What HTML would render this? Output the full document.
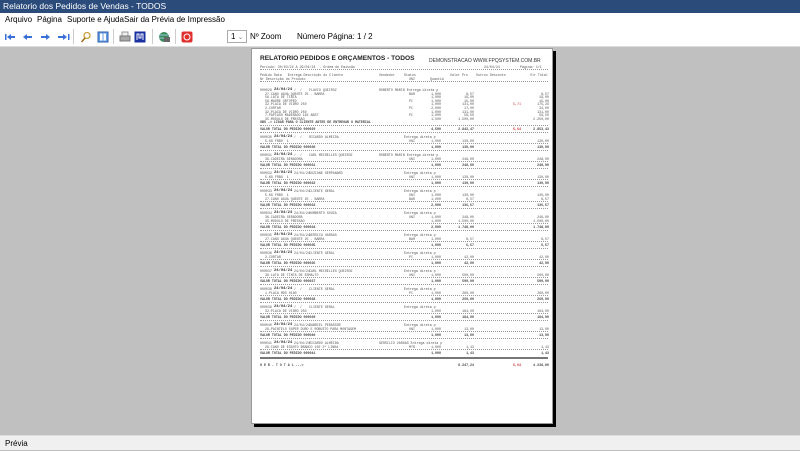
<!DOCTYPE html>
<html><head><meta charset="utf-8"><style>
*{margin:0;padding:0;box-sizing:border-box}
body{width:800px;height:450px;overflow:hidden;background:#c0c0c0;font-family:"Liberation Sans",sans-serif;position:relative}
#tb{position:absolute;left:0;top:0;width:800px;height:13px;background:#2b4b7b;color:#fff;font-size:8.5px;line-height:13px;padding-left:3px}
#mn{position:absolute;left:0;top:13px;width:800px;height:13px;background:#fff;font-size:8px;line-height:13px}
#mn span{position:absolute;top:0}
#tl{position:absolute;left:0;top:26px;width:800px;height:21px;background:#fff;border-bottom:1px solid #ddd}
.ic{position:absolute;top:5px}
.sep{position:absolute;top:3px;width:1px;height:15px;background:#ccc}
#st{position:absolute;left:0;top:435px;width:800px;height:15px;background:#f0f0f0;font-size:8px;line-height:15px;padding-left:5px;border-top:1px solid #ddd}
#sh{position:absolute;left:254px;top:51px;width:302px;height:376px;background:#000}
#pg{position:absolute;left:251px;top:48px;width:302px;height:376px;background:#fff;border:1px solid #999;font-family:"Liberation Mono",monospace;color:#555;font-size:3.3px;overflow:hidden}
.r{position:absolute;left:0;width:302px;height:4px;line-height:4px;white-space:pre}
.r span{position:absolute;top:0}
.a{left:8px}.d{left:22px;font-weight:bold;color:#333;font-size:3.8px}.s{left:42px}.c{left:57px}.v{left:127px}.e{left:152px}
.i{left:13px}.u{left:157px}.q{right:113px}.p{right:80px}.x{right:33px;color:#c33}.t{right:5px}
.dl{position:absolute;left:8px;width:288px;border-top:1px dotted #999;height:0}
.tot{color:#444;font-weight:bold}
</style></head><body>
<div id="tb">Relatorio dos Pedidos de Vendas - TODOS</div>
<div id="mn"><span style="left:5px">Arquivo</span><span style="left:37px">Página</span><span style="left:67px">Suporte e Ajuda</span><span style="left:124px">Sair da Prévia de Impressão</span></div>
<div id="tl">
<svg class="ic" style="left:4px" width="70" height="12"><g fill="#3a6fd8"><rect x="1" y="3" width="1.5" height="6"/><path d="M3 6l4-3v2h4v2H7v2z"/><path d="M19 6l4-3v2h5v2h-5v2z"/><path d="M46 6l-4-3v2h-5v2h5v2z"/><path d="M63 6l-4-3v2h-5v2h5v2z"/><rect x="64" y="3" width="1.5" height="6"/></g></svg>
<div class="sep" style="left:73px"></div>
<svg class="ic" style="left:80px" width="12" height="12"><circle cx="7" cy="4.5" r="3" fill="none" stroke="#c9a040" stroke-width="1.3"/><path d="M5 7L1.5 11" stroke="#a07020" stroke-width="1.6"/></svg>
<svg class="ic" style="left:97px" width="12" height="12"><rect x="1" y="1" width="10" height="10" fill="#6a9ee0" stroke="#2a5fb0"/><rect x="3" y="2.5" width="2.5" height="7" fill="#fff"/><rect x="6.5" y="2.5" width="2.5" height="7" fill="#fff"/></svg>
<div class="sep" style="left:113px"></div>
<svg class="ic" style="left:119px" width="12" height="12"><rect x="3" y="1" width="6" height="4" fill="#eee" stroke="#999"/><rect x="1" y="5" width="10" height="5" fill="#aaa" stroke="#777"/></svg>
<svg class="ic" style="left:134px" width="12" height="12"><rect x="0.5" y="0.5" width="11" height="11" fill="#1a2fa0"/><path d="M3 9V3h2v4h2V3h2v6" fill="none" stroke="#fff" stroke-width="1"/></svg>
<div class="sep" style="left:152px"></div>
<svg class="ic" style="left:158px" width="13" height="12"><circle cx="6" cy="6" r="5" fill="#3a8a5a"/><path d="M2 4h8M1 7h10" stroke="#9cd" stroke-width="1"/><rect x="6" y="6" width="6" height="5" fill="#666"/></svg>
<div class="sep" style="left:175px"></div>
<svg class="ic" style="left:181px" width="12" height="12"><rect x="0.5" y="0.5" width="11" height="11" rx="2" fill="#e03030"/><circle cx="6" cy="6" r="3" fill="none" stroke="#fff" stroke-width="1"/></svg>
<div style="position:absolute;left:227px;top:4px;width:20px;height:13px;border:1px solid #aaa;font-size:8px;line-height:11px;padding-left:3px">1 <span style="color:#888;font-size:7px">⌄</span></div>
<div style="position:absolute;left:250px;top:4px;font-size:8px;line-height:13px">Nº Zoom</div>
<div style="position:absolute;left:297px;top:4px;font-size:8px;line-height:13px">Número Página: 1 / 2</div>
</div>
<div id="sh"></div>
<div id="pg">
<div style="position:absolute;left:8px;top:6px;font-family:'Liberation Sans',sans-serif;font-weight:bold;font-size:6.6px;color:#222;white-space:nowrap">RELATORIO PEDIDOS E ORÇAMENTOS - TODOS</div>
<div style="position:absolute;left:177px;top:9px;font-family:'Liberation Sans',sans-serif;font-size:5px;color:#333;white-space:nowrap">DEMONSTRACAO WWW.FPQSYSTEM.COM.BR</div>
<div class="r" style="top:16px"><span class="a">Período: 30/03/24 A 29/04/24  - Ordem de Emissão</span><span style="left:232px">24/04/24</span><span style="left:268px">Página: 1/1</span></div>
<div class="dl" style="top:20px"></div>
<div class="r" style="top:24px"><span class="a">Pedido Data   Entrega Descrição do Cliente</span><span class="v">Vendedor</span><span class="e">Status</span><span style="left:198px">Valor Pro</span><span style="left:224px">Outros Desconto</span><span style="left:278px">Vlr Total</span></div>
<div class="r" style="top:28px"><span class="a">Nr Descrição do Produto</span><span class="u">UNI</span><span style="left:178px">Quantid</span></div>
<div class="dl" style="top:32px"></div>

<div class="r" style="top:39px"><span class="a">000029</span><span class="d">24/04/24</span><span class="s">/  /</span><span class="c">FLAVIO QUEIROZ</span><span class="v">ROBERTO MARIN Entrega direta p</span></div>
<div class="r" style="top:42.6px"><span class="i">27-CANO AGUA QUENTE 25 - BARRA</span><span class="u">BAR</span><span class="q">1,000</span><span class="p">6,57</span><span class="t">6,57</span></div>
<div class="r" style="top:46.2px"><span class="i">56-LATA DE TINTA</span><span class="q">1,000</span><span class="p">19,00</span><span class="t">19,00</span></div>
<div class="r" style="top:49.8px"><span class="i">58-MADRE ORTOPED</span><span class="u">PC</span><span class="q">1,000</span><span class="p">15,00</span><span class="t">15,00</span></div>
<div class="r" style="top:53.4px"><span class="i">32-PLACA DE VIDRO 250</span><span class="q">1,000</span><span class="p">131,00</span><span class="x">5,71</span><span class="t">175,29</span></div>
<div class="r" style="top:57px"><span class="i">2-CORTAR</span><span class="u">PC</span><span class="q">2,000</span><span class="p">17,00</span><span class="t">34,00</span></div>
<div class="r" style="top:60.6px"><span class="i">32-PLACA DE VIDRO 250</span><span class="q">1,000</span><span class="p">131,00</span><span class="t">131,00</span></div>
<div class="r" style="top:64.2px"><span class="i">7-PAPIASO MADERADO 162 ABST</span><span class="u">PC</span><span class="q">1,000</span><span class="p">59,50</span><span class="t">59,50</span></div>
<div class="r" style="top:67.8px"><span class="i">35-MODULO DE PRESSAO</span><span class="q">1,500</span><span class="p">1.500,00</span><span class="t">2.250,00</span></div>
<div class="r tot" style="top:71.4px"><span class="a">OBS -&gt; LIGAR PARA O CLIENTE ANTES DE ENTREGAR O MATERIAL</span></div>
<div class="dl" style="top:76px"></div>
<div class="r tot" style="top:78px"><span class="a">VALOR TOTAL DO PEDIDO 000029</span><span class="q">4,500</span><span class="p">2.842,47</span><span class="x">5,64</span><span class="t">2.853,43</span></div>
<div class="dl" style="top:83px"></div>

<div class="r" style="top:86px"><span class="a">000030</span><span class="d">24/04/24</span><span class="s">/  /</span><span class="c">RICARDO ALMEIDA</span><span class="e">Entrega direta p</span></div>
<div class="r" style="top:90px"><span class="i">5-KG FRBO  1</span><span class="u">UNI</span><span class="q">1,000</span><span class="p">130,00</span><span class="t">130,00</span></div>
<div class="dl" style="top:94px"></div>
<div class="r tot" style="top:96px"><span class="a">VALOR TOTAL DO PEDIDO 000030</span><span class="q">1,000</span><span class="p">130,00</span><span class="t">130,00</span></div>
<div class="dl" style="top:101px"></div>

<div class="r" style="top:104px"><span class="a">000031</span><span class="d">24/04/24</span><span class="s">/  /</span><span class="c">CARL MEIRELLES QUEIROZ</span><span class="v">ROBERTO MARIN Entrega direta p</span></div>
<div class="r" style="top:108px"><span class="i">36-CADEIRA GERADORA</span><span class="u">UNI</span><span class="q">1,000</span><span class="p">248,00</span><span class="t">248,00</span></div>
<div class="dl" style="top:112px"></div>
<div class="r tot" style="top:114px"><span class="a">VALOR TOTAL DO PEDIDO 000031</span><span class="q">1,000</span><span class="p">248,00</span><span class="t">248,00</span></div>
<div class="dl" style="top:119px"></div>

<div class="r" style="top:122px"><span class="a">000032</span><span class="d">24/04/24</span><span class="s">24/04/24</span><span class="c">SUZIANE SERPANARD</span><span class="e">Entrega direta p</span></div>
<div class="r" style="top:126px"><span class="i">5-KG FRBO  1</span><span class="u">UNI</span><span class="q">1,000</span><span class="p">130,00</span><span class="t">130,00</span></div>
<div class="dl" style="top:130px"></div>
<div class="r tot" style="top:132px"><span class="a">VALOR TOTAL DO PEDIDO 000032</span><span class="q">1,000</span><span class="p">130,00</span><span class="t">130,00</span></div>
<div class="dl" style="top:137px"></div>

<div class="r" style="top:140px"><span class="a">000033</span><span class="d">24/04/24</span><span class="s">24/04/24</span><span class="c">CLIENTE GERAL</span><span class="e">Entrega direta p</span></div>
<div class="r" style="top:144px"><span class="i">5-KG FRBO  1</span><span class="u">UNI</span><span class="q">1,000</span><span class="p">130,00</span><span class="t">130,00</span></div>
<div class="r" style="top:147.6px"><span class="i">27-CANO AGUA QUENTE 25 - BARRA</span><span class="u">BAR</span><span class="q">1,000</span><span class="p">6,57</span><span class="t">6,57</span></div>
<div class="dl" style="top:152px"></div>
<div class="r tot" style="top:154px"><span class="a">VALOR TOTAL DO PEDIDO 000033</span><span class="q">2,000</span><span class="p">136,57</span><span class="t">136,57</span></div>
<div class="dl" style="top:159px"></div>

<div class="r" style="top:162px"><span class="a">000034</span><span class="d">24/04/24</span><span class="s">24/04/24</span><span class="c">HUMBERTO SOUZA</span><span class="e">Entrega direta p</span></div>
<div class="r" style="top:166px"><span class="i">36-CADEIRA GERADORA</span><span class="u">UNI</span><span class="q">1,000</span><span class="p">248,00</span><span class="t">248,00</span></div>
<div class="r" style="top:169.6px"><span class="i">35-MODULO DE PRESSAO</span><span class="q">1,000</span><span class="p">1.500,00</span><span class="t">1.500,00</span></div>
<div class="dl" style="top:174px"></div>
<div class="r tot" style="top:176px"><span class="a">VALOR TOTAL DO PEDIDO 000034</span><span class="q">2,000</span><span class="p">1.748,00</span><span class="t">1.748,00</span></div>
<div class="dl" style="top:181px"></div>

<div class="r" style="top:184px"><span class="a">000035</span><span class="d">24/04/24</span><span class="s">24/04/24</span><span class="c">GERSICA VARGAS</span><span class="e">Entrega direta p</span></div>
<div class="r" style="top:188px"><span class="i">27-CANO AGUA QUENTE 25 - BARRA</span><span class="u">BAR</span><span class="q">1,000</span><span class="p">6,57</span><span class="t">6,57</span></div>
<div class="dl" style="top:192px"></div>
<div class="r tot" style="top:194px"><span class="a">VALOR TOTAL DO PEDIDO 000035</span><span class="q">1,000</span><span class="p">6,57</span><span class="t">6,57</span></div>
<div class="dl" style="top:199px"></div>

<div class="r" style="top:202px"><span class="a">000036</span><span class="d">24/04/24</span><span class="s">24/04/24</span><span class="c">CLIENTE GERAL</span><span class="e">Entrega direta p</span></div>
<div class="r" style="top:206px"><span class="i">2-CORTAR</span><span class="u">PC</span><span class="q">1,000</span><span class="p">42,00</span><span class="t">42,00</span></div>
<div class="dl" style="top:210px"></div>
<div class="r tot" style="top:212px"><span class="a">VALOR TOTAL DO PEDIDO 000036</span><span class="q">1,000</span><span class="p">42,00</span><span class="t">42,00</span></div>
<div class="dl" style="top:217px"></div>

<div class="r" style="top:220px"><span class="a">000037</span><span class="d">24/04/24</span><span class="s">24/04/24</span><span class="c">CARL MEIRELLES QUEIROZ</span><span class="e">Entrega direta p</span></div>
<div class="r" style="top:224px"><span class="i">38-LATA DE TINTA DE ESMALTO</span><span class="u">UNI</span><span class="q">1,000</span><span class="p">500,00</span><span class="t">500,00</span></div>
<div class="dl" style="top:228px"></div>
<div class="r tot" style="top:230px"><span class="a">VALOR TOTAL DO PEDIDO 000037</span><span class="q">1,000</span><span class="p">500,00</span><span class="t">500,00</span></div>
<div class="dl" style="top:235px"></div>

<div class="r" style="top:238px"><span class="a">000038</span><span class="d">24/04/24</span><span class="s">/  /</span><span class="c">CLIENTE GERAL</span><span class="e">Entrega direta p</span></div>
<div class="r" style="top:242px"><span class="i">1-PLACA MDS 0180</span><span class="u">PC</span><span class="q">1,000</span><span class="p">260,00</span><span class="t">260,00</span></div>
<div class="dl" style="top:246px"></div>
<div class="r tot" style="top:248px"><span class="a">VALOR TOTAL DO PEDIDO 000038</span><span class="q">1,000</span><span class="p">260,00</span><span class="t">260,00</span></div>
<div class="dl" style="top:253px"></div>

<div class="r" style="top:256px"><span class="a">000039</span><span class="d">24/04/24</span><span class="s">/  /</span><span class="c">CLIENTE GERAL</span><span class="e">Entrega direta p</span></div>
<div class="r" style="top:260px"><span class="i">32-PLACA DE VIDRO 250</span><span class="q">1,000</span><span class="p">184,00</span><span class="t">184,00</span></div>
<div class="dl" style="top:264px"></div>
<div class="r tot" style="top:266px"><span class="a">VALOR TOTAL DO PEDIDO 000039</span><span class="q">1,000</span><span class="p">184,00</span><span class="t">184,00</span></div>
<div class="dl" style="top:271px"></div>

<div class="r" style="top:274px"><span class="a">000040</span><span class="d">24/04/24</span><span class="s">24/04/24</span><span class="c">GABRIEL PERASSOR</span><span class="e">Entrega direta p</span></div>
<div class="r" style="top:278px"><span class="i">29-PAINTELO SUPER DURO E ROBUSTO PARA MONTAGEM</span><span class="u">UNI</span><span class="q">1,000</span><span class="p">13,00</span><span class="t">13,00</span></div>
<div class="dl" style="top:282px"></div>
<div class="r tot" style="top:284px"><span class="a">VALOR TOTAL DO PEDIDO 000040</span><span class="q">1,000</span><span class="p">13,00</span><span class="t">13,00</span></div>
<div class="dl" style="top:289px"></div>

<div class="r" style="top:292px"><span class="a">000041</span><span class="d">24/04/24</span><span class="s">24/04/24</span><span class="c">RICARDO ALMEIDA</span><span class="v">GERSILIO VARGAS Entrega direta p</span></div>
<div class="r" style="top:296px"><span class="i">29-CANO DE ESGOTO BRANCO 150 2ª LINHA</span><span class="u">MTR</span><span class="q">1,000</span><span class="p">1,43</span><span class="t">1,43</span></div>
<div class="dl" style="top:300px"></div>
<div class="r tot" style="top:302px"><span class="a">VALOR TOTAL DO PEDIDO 000041</span><span class="q">1,000</span><span class="p">1,43</span><span class="t">1,43</span></div>
<div style="position:absolute;left:8px;top:308px;width:288px;height:2px;border-top:1px solid #777;border-bottom:1px solid #777"></div>
<div class="r tot" style="top:314px"><span class="a">G E R - T O T A L ---&gt;</span><span class="p">8.247,24</span><span class="x">5,64</span><span class="t">4.238,00</span></div>
</div>
<div id="st">Prévia</div>
</body></html>
